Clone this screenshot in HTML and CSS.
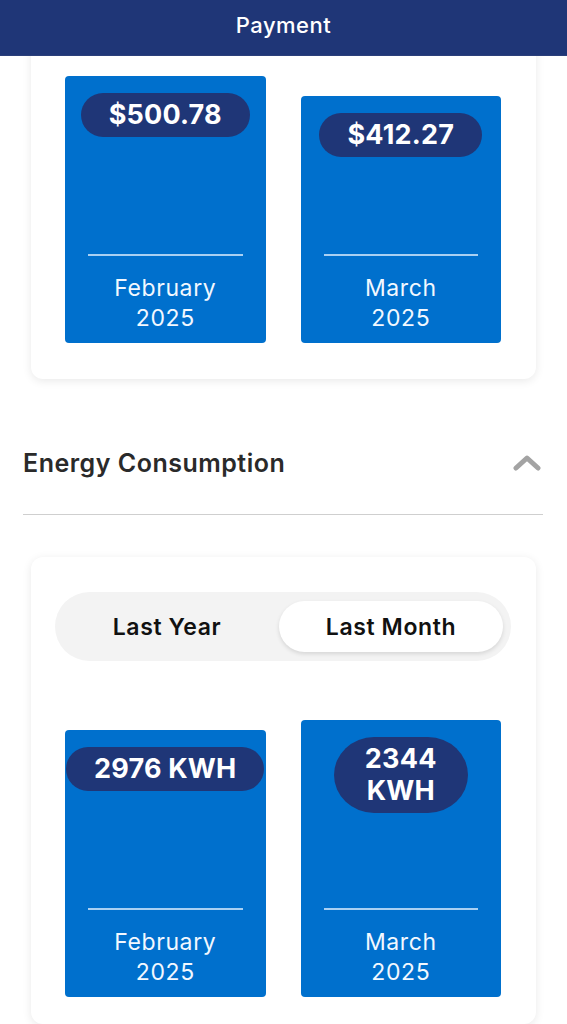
FILE: index.html
```html
<!DOCTYPE html>
<html lang="en">
<head>
<meta charset="utf-8">
<title>Payment</title>
<link rel="stylesheet" href="styles.css">
</head>
<body>
<header class="topbar">Payment</header>
<main class="content">
  <section class="card card-top">
    <div class="bars">
      <div class="bar" style="height:267px">
        <span class="pill">$500.78</span>
        <div class="bar-foot">
          <div class="bar-line"></div>
          <div class="bar-label">February<br>2025</div>
        </div>
      </div>
      <div class="bar" style="height:247px">
        <span class="pill">$412.27</span>
        <div class="bar-foot">
          <div class="bar-line"></div>
          <div class="bar-label">March<br>2025</div>
        </div>
      </div>
    </div>
  </section>

  <div class="section-head">
    <h2 class="section-title">Energy Consumption</h2>
    <svg class="chevron" width="28" height="18" viewBox="0 0 28 18" aria-hidden="true">
      <polyline points="3,14 14,4 25,14" fill="none" stroke="#a3a3a3" stroke-width="5" stroke-linecap="round" stroke-linejoin="round"/>
    </svg>
  </div>
  <div class="divider"></div>

  <section class="card card-bottom">
    <div class="toggle">
      <div class="toggle-opt">Last Year</div>
      <div class="toggle-opt active">Last Month</div>
    </div>
    <div class="bars">
      <div class="bar" style="height:267px">
        <span class="pill">2976 KWH</span>
        <div class="bar-foot">
          <div class="bar-line"></div>
          <div class="bar-label">February<br>2025</div>
        </div>
      </div>
      <div class="bar" style="height:277px">
        <span class="pill pill-wide">2344<br>KWH</span>
        <div class="bar-foot">
          <div class="bar-line"></div>
          <div class="bar-label">March<br>2025</div>
        </div>
      </div>
    </div>
  </section>
</main>
</body>
</html>
```

FILE: styles.css
```css
* { box-sizing: border-box; }

html, body {
  margin: 0;
  padding: 0;
  background: #ffffff;
  font-family: Inter, "Noto Sans", "Liberation Sans", sans-serif;
  overflow: hidden;
}

.topbar {
  position: relative;
  z-index: 2;
  height: 55px;
  background: #1f3677;
  color: #ffffff;
  font-size: 22px;
  font-weight: 500;
  letter-spacing: 0.5px;
  line-height: 50px;
  text-align: center;
  box-shadow: 0 1px 0 #2b3f7a;
}

.content {
  padding: 0 24px 0 23px;
}

.card {
  margin: 0 7px 0 8px;
  background: #ffffff;
  border-radius: 12px;
  box-shadow: 0 2px 10px rgba(0, 0, 0, 0.09);
}

.card-top {
  margin-top: -14px;
  padding: 35px 35px 36px 34px;
}

.card-bottom {
  margin-top: 42px;
  padding: 35px 25px 27px 24px;
}

.bars {
  display: grid;
  grid-template-columns: 1fr 1fr;
  column-gap: 35px;
  align-items: end;
}

.card-bottom .bars {
  margin-top: 59px;
  padding: 0 10px;
}

.bar {
  background: #0070cd;
  border-radius: 4px;
  padding-top: 17px;
  display: flex;
  flex-direction: column;
  align-items: center;
  justify-content: space-between;
}

.pill {
  display: inline-block;
  max-width: 100%;
  background: #1f3677;
  color: #ffffff;
  font-weight: 700;
  font-size: 27px;
  letter-spacing: 0.2px;
  line-height: 32px;
  padding: 6px 28px;
  border-radius: 40px;
  text-align: center;
}

.pill-wide {
  padding: 6px 31px;
  border-radius: 40px / 38px;
}

.bar-foot {
  align-self: stretch;
  padding: 0 23px 10px;
}

.bar-line {
  height: 2px;
  background: #a9d0f3;
}

.bar-label {
  margin-top: 17px;
  color: #f2f8ff;
  font-size: 23px;
  letter-spacing: 0.6px;
  line-height: 30px;
  text-align: center;
}

.section-head {
  display: flex;
  align-items: center;
  justify-content: space-between;
  margin-top: 69px;
  height: 30px;
}

.section-title {
  margin: 0;
  font-size: 25px;
  font-weight: 600;
  letter-spacing: 0.5px;
  color: #2a2a2a;
  line-height: 30px;
}

.chevron {
  margin-right: 2px;
}

.divider {
  margin-top: 36px;
  height: 1px;
  background: #cfcfcf;
}

.toggle {
  display: flex;
  height: 69px;
  padding: 9px 8px 9px 0;
  background: #f3f3f3;
  border-radius: 35px;
}

.toggle-opt {
  flex: 1;
  display: flex;
  align-items: center;
  justify-content: center;
  font-size: 23px;
  font-weight: 600;
  letter-spacing: 0.6px;
  color: #111111;
  border-radius: 26px;
}

.toggle-opt.active {
  background: #ffffff;
  box-shadow: 0 2px 4px rgba(0, 0, 0, 0.12);
}
```
